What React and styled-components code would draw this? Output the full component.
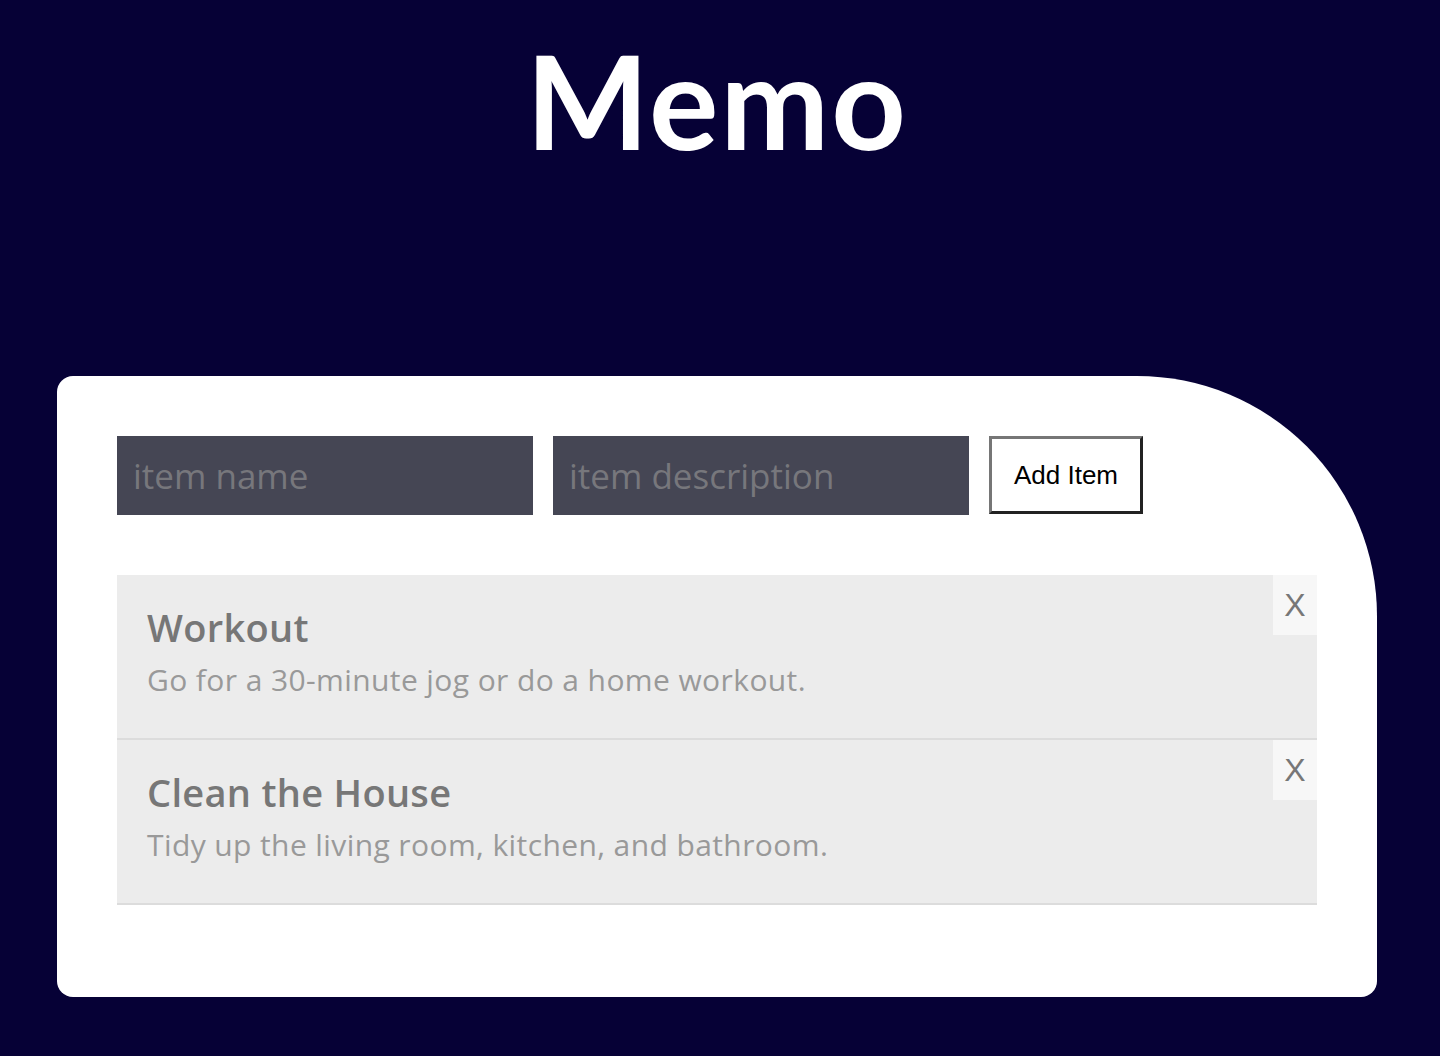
import React from "react";
import styled, { createGlobalStyle } from "styled-components";

const Global = createGlobalStyle`
  html, body { margin: 0; padding: 0; background: #060136; }
  body { font-family: "Open Sans", "Noto Sans", sans-serif; }
  * { box-sizing: border-box; }
`;

const Page = styled.div`
  width: 1440px;
  min-height: 1056px;
  background: #060136;
  padding-left: 57px;
`;

const Header = styled.header`
  width: 1320px;
  height: 376px;
  padding-top: 35px;
  display: flex;
  justify-content: center;
  align-items: flex-start;
`;

const Title = styled.h1`
  margin: 0;
  font-family: "Lato", "Open Sans", sans-serif;
  font-weight: 700;
  font-size: 130px;
  line-height: 130px;
  color: #ffffff;
  letter-spacing: 2px;
`;

const Card = styled.main`
  width: 1320px;
  height: 621px;
  background: #ffffff;
  border-radius: 16px 240px 16px 16px / 16px 240px 16px 16px;
  padding: 60px 60px 0 60px;
`;

const Form = styled.form`
  display: flex;
  gap: 20px;
  align-items: stretch;
`;

const Input = styled.input`
  width: 416px;
  height: 79px;
  border: none;
  outline: none;
  background: #454654;
  color: #dddddd;
  padding: 0 16px;
  font-family: "Open Sans", sans-serif;
  font-size: 35px;
  &::placeholder { color: #77777c; }
`;

const AddButton = styled.button`
  width: 154px;
  height: 78px;
  background: #ffffff;
  color: #000000;
  font-family: "Liberation Sans", Arial, sans-serif;
  font-size: 26px;
  padding: 0;
  border-style: solid;
  border-width: 3px;
  border-color: #767676 #222222 #222222 #767676;
`;

const List = styled.ul`
  list-style: none;
  margin: 60px 0 0;
  padding: 0;
  width: 1200px;
`;

const Item = styled.li`
  display: flex;
  justify-content: space-between;
  align-items: flex-start;
  background: #ececec;
  border-bottom: 2px solid #dcdcdc;
  height: 165px;
`;

const ItemBody = styled.div`
  padding: 33px 30px 0;
`;

const ItemTitle = styled.h2`
  margin: 0;
  font-family: "Open Sans", sans-serif;
  font-weight: 600;
  font-size: 38px;
  line-height: 38px;
  letter-spacing: 0.3px;
  color: #777777;
`;

const ItemText = styled.p`
  margin: 19px 0 0;
  font-family: "Open Sans", sans-serif;
  font-size: 30px;
  line-height: 29px;
  letter-spacing: 0.4px;
  color: #999999;
`;

const RemoveButton = styled.button`
  width: 44px;
  height: 60px;
  border: none;
  padding: 0;
  background: #f7f7f7;
  color: #777777;
  font-family: "Liberation Sans", Arial, sans-serif;
  font-size: 32px;
`;

const items = [
  { title: "Workout", text: "Go for a 30-minute jog or do a home workout." },
  { title: "Clean the House", text: "Tidy up the living room, kitchen, and bathroom." },
];

export default function App() {
  return (
    <Page>
      <Global />
      <Header>
        <Title>Memo</Title>
      </Header>
      <Card>
        <Form onSubmit={(e) => e.preventDefault()}>
          <Input placeholder="item name" />
          <Input placeholder="item description" />
          <AddButton type="submit">Add Item</AddButton>
        </Form>
        <List>
          {items.map((it) => (
            <Item key={it.title}>
              <ItemBody>
                <ItemTitle>{it.title}</ItemTitle>
                <ItemText>{it.text}</ItemText>
              </ItemBody>
              <RemoveButton>X</RemoveButton>
            </Item>
          ))}
        </List>
      </Card>
    </Page>
  );
}
